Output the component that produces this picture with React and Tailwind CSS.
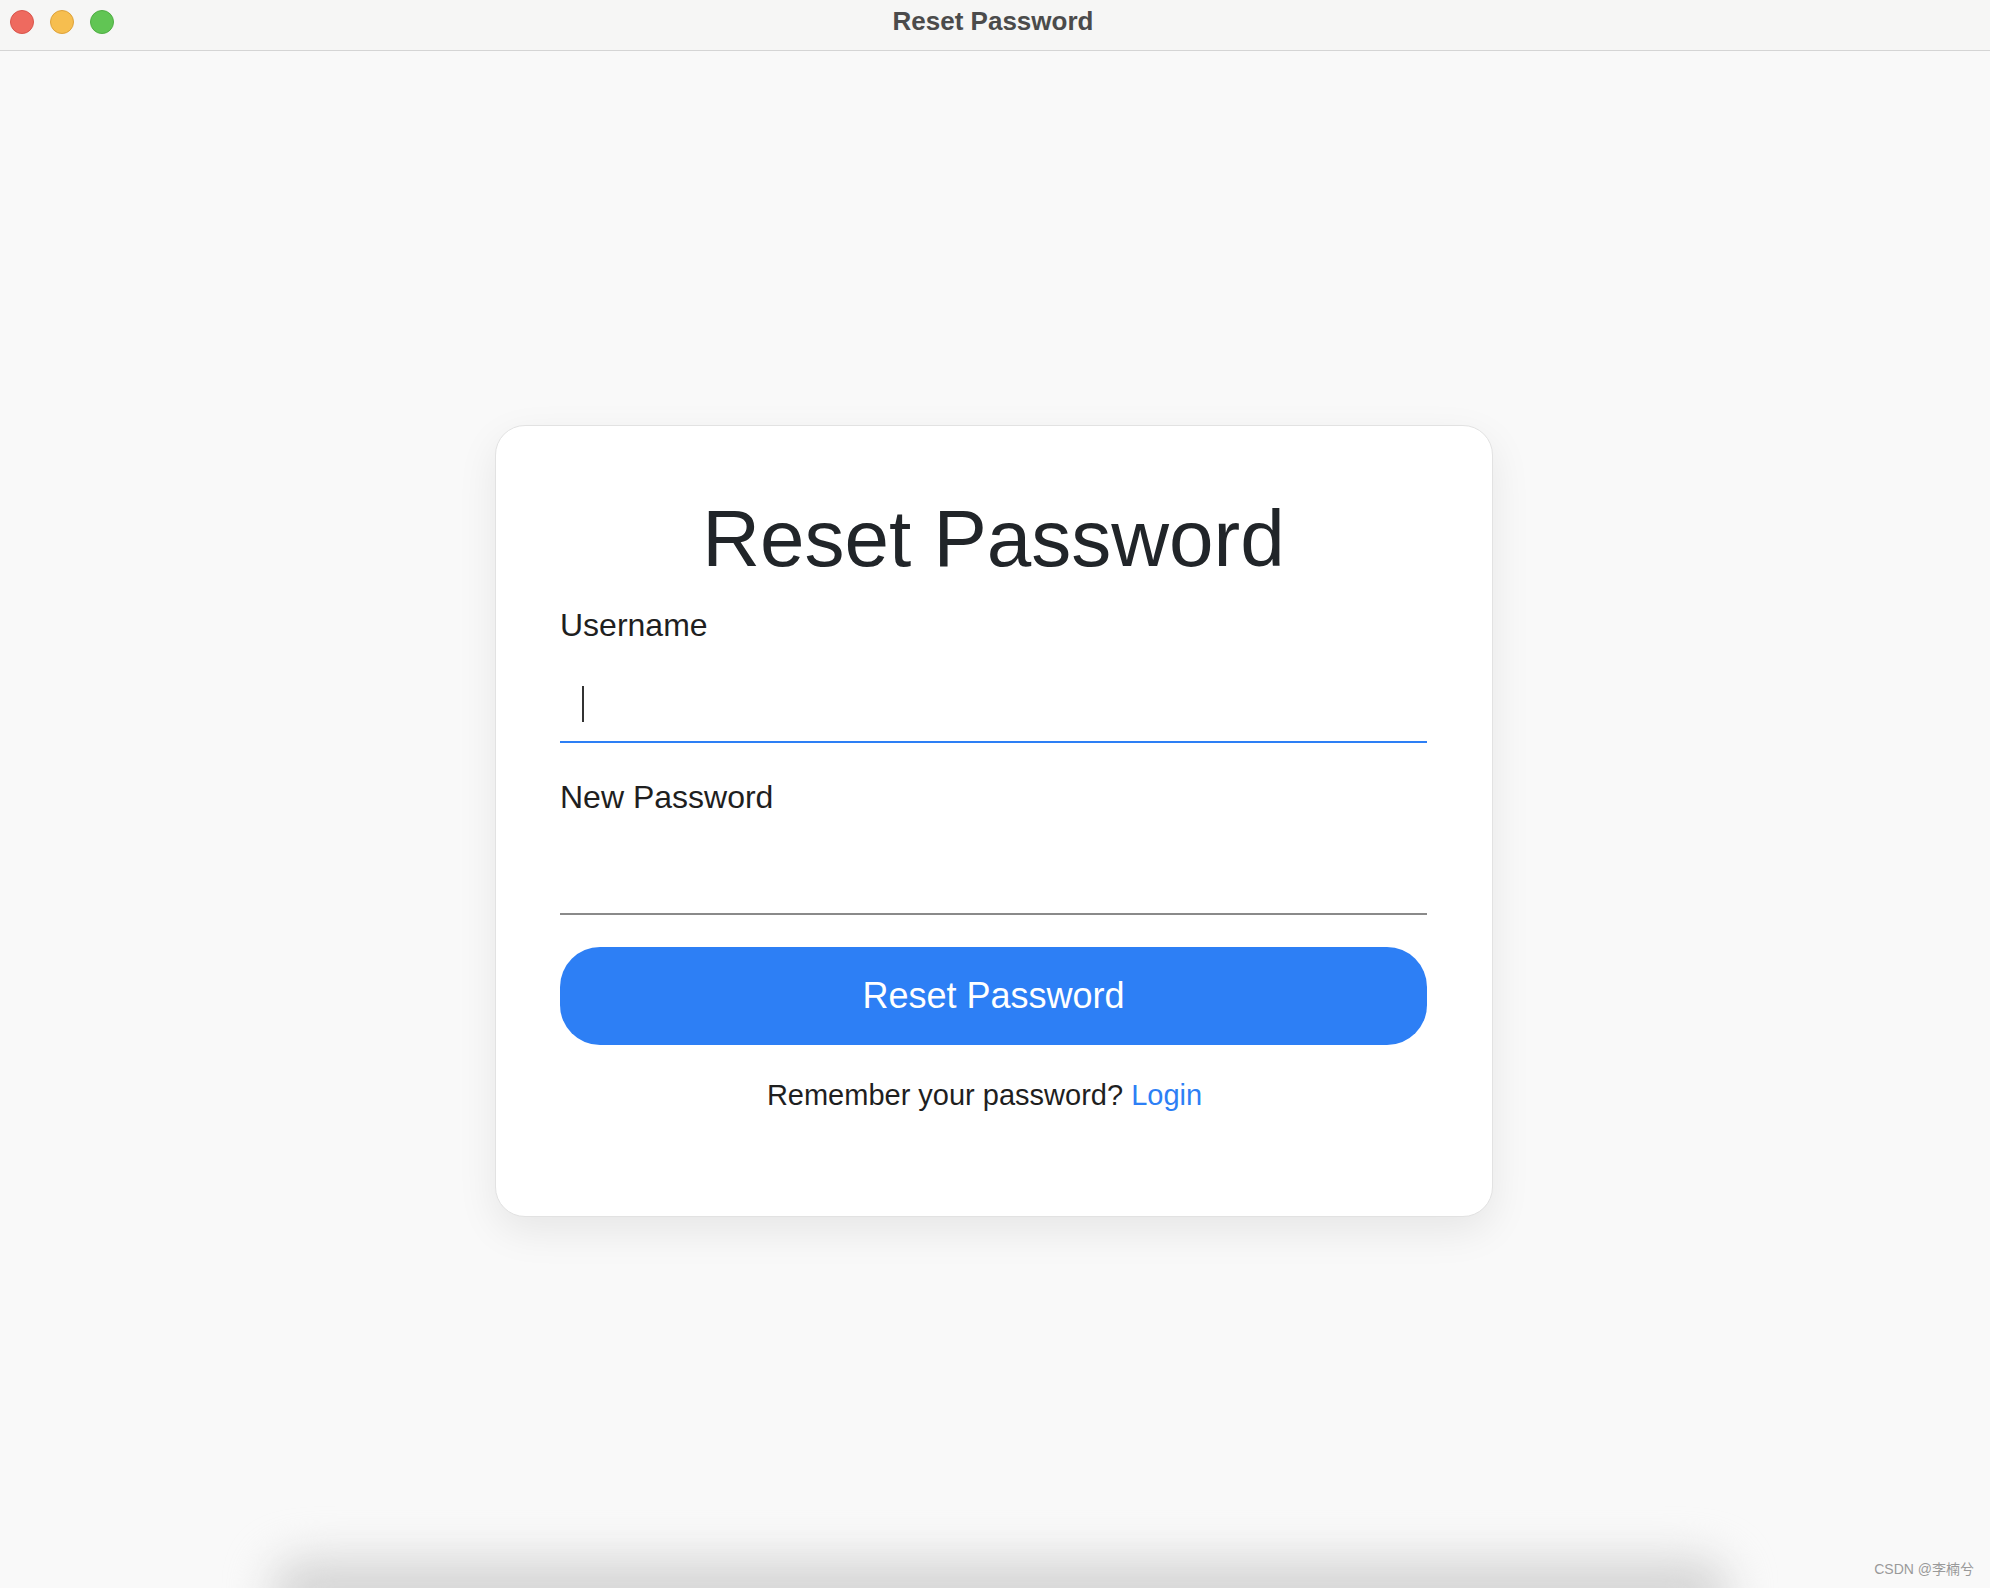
import React from 'react';

const font = { fontFamily: '"Liberation Sans", Arial, sans-serif' };

const TitleBar = () => (
  <div className="relative h-[51px] shrink-0 bg-[#f6f6f5] border-b border-[#d5d5d5] flex items-center justify-center">
    <div className="absolute left-[10px] top-[10px] flex gap-[16px]">
      <span className="w-[24px] h-[24px] rounded-full bg-[#ee6a5f] border border-[#d9554b]"></span>
      <span className="w-[24px] h-[24px] rounded-full bg-[#f6be4f] border border-[#dea23a]"></span>
      <span className="w-[24px] h-[24px] rounded-full bg-[#61c554] border border-[#4fae43]"></span>
    </div>
    <span className="text-[26px] font-bold text-[#4b4b4b] -mt-[7px] -ml-[4px]">Reset Password</span>
  </div>
);

const Field = ({ label, type, focused }) => (
  <div className="flex flex-col">
    <label className="text-[32px] leading-[37px] text-[#1f1f1f]">{label}</label>
    <div className="relative mt-[21px]">
      <input
        type={type}
        className={
          'w-full h-[78px] px-[24px] text-[30px] bg-transparent outline-none border-b-2 ' +
          (focused ? 'border-[#2d7ff5]' : 'border-[#8a8a8a]')
        }
      />
      {focused && <span className="absolute left-[22px] top-[21px] w-[2px] h-[36px] bg-[#333]"></span>}
    </div>
  </div>
);

export default function App() {
  return (
    <div className="relative w-[1990px] h-[1588px] overflow-hidden bg-[#f9f9f9] flex flex-col" style={font}>
      <TitleBar />
      <div className="flex-1 flex items-center justify-center">
        <div className="mt-[3px] -ml-[2px] w-[998px] bg-white border border-[#e2e2e2] rounded-[30px] shadow-[0_14px_40px_rgba(0,0,0,0.08)] pl-[64px] pr-[65px] pt-[67px] pb-[104px] flex flex-col">
          <h1 className="text-[80px] leading-[92px] text-center text-[#212529]">Reset Password</h1>
          <div className="mt-[22px]">
            <Field label="Username" type="text" focused />
          </div>
          <div className="mt-[36px]">
            <Field label="New Password" type="password" />
          </div>
          <button className="mt-[32px] h-[98px] w-full rounded-[40px] bg-[#2d7ff5] text-white text-[36px]">
            Reset Password
          </button>
          <p className="mt-[34px] pr-[18px] text-center text-[29px] leading-[33px] text-[#1f1f1f]">
            Remember your password? <a className="text-[#2d7ff5] cursor-pointer">Login</a>
          </p>
        </div>
      </div>
      <div className="absolute left-[270px] w-[1460px] bottom-[-40px] h-[70px] rounded-full bg-[#d6d6d6] blur-[22px]"></div>
      <span
        className="absolute right-[16px] bottom-[8px] text-[14px] text-[#9a9a9a]"
        style={{ fontFamily: '"Liberation Sans", "Noto Sans CJK SC", sans-serif' }}
      >
        CSDN @李楠兮
      </span>
    </div>
  );
}
